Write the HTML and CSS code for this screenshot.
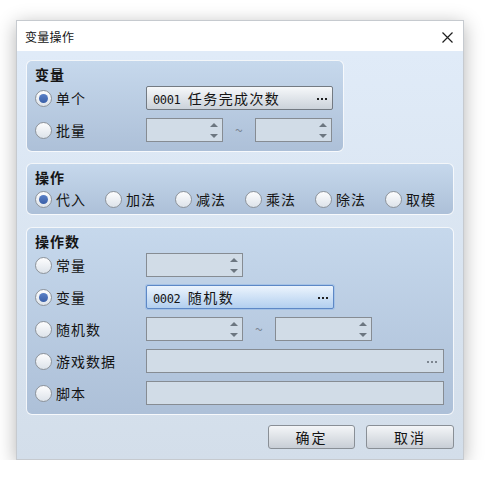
FILE: index.html
```html
<!DOCTYPE html>
<html lang="zh-CN">
<head>
    <meta charset="UTF-8">
    <title>变量操作</title>
    <link rel="stylesheet" href="styles.css">
</head>
<body>
    <div class="page">
        <div class="dialog">
            <div class="titlebar">
                <span class="title">变量操作</span>
                <svg class="close" width="11" height="11" viewBox="0 0 11 11">
                    <path d="M0.5 0.5 L10.5 10.5 M10.5 0.5 L0.5 10.5" stroke="#1e1e1e" stroke-width="1.2" fill="none"/>
                </svg>
            </div>
            <div class="content">
                <!-- target variable -->
                <div class="group group-var">
                    <div class="group-title">变量</div>
                    <div class="row">
                        <label class="opt"><span class="radio checked"></span>单个</label>
                        <div class="picker w187"><span class="ptext"><span class="num">0001</span> 任务完成次数</span><span class="dots"><i></i><i></i><i></i></span></div>
                    </div>
                    <div class="row">
                        <label class="opt"><span class="radio"></span>批量</label>
                        <div class="spin w77"><span class="arrows"><b class="up"></b><b class="down"></b></span></div>
                        <span class="tilde">~</span>
                        <div class="spin w77"><span class="arrows"><b class="up"></b><b class="down"></b></span></div>
                    </div>
                </div>

                <!-- operation -->
                <div class="group group-op">
                    <div class="group-title">操作</div>
                    <div class="op-row">
                        <label class="opt op"><span class="radio checked"></span>代入</label>
                        <label class="opt op"><span class="radio"></span>加法</label>
                        <label class="opt op"><span class="radio"></span>减法</label>
                        <label class="opt op"><span class="radio"></span>乘法</label>
                        <label class="opt op"><span class="radio"></span>除法</label>
                        <label class="opt op"><span class="radio"></span>取模</label>
                    </div>
                </div>

                <!-- operand -->
                <div class="group group-operand">
                    <div class="group-title">操作数</div>
                    <div class="row">
                        <label class="opt"><span class="radio"></span>常量</label>
                        <div class="spin w97"><span class="arrows"><b class="up"></b><b class="down"></b></span></div>
                    </div>
                    <div class="row">
                        <label class="opt"><span class="radio checked"></span>变量</label>
                        <div class="picker focused w188"><span class="ptext"><span class="num">0002</span> 随机数</span><span class="dots"><i></i><i></i><i></i></span></div>
                    </div>
                    <div class="row">
                        <label class="opt"><span class="radio"></span>随机数</label>
                        <div class="spin w97"><span class="arrows"><b class="up"></b><b class="down"></b></span></div>
                        <span class="tilde">~</span>
                        <div class="spin w97"><span class="arrows"><b class="up"></b><b class="down"></b></span></div>
                    </div>
                    <div class="row">
                        <label class="opt"><span class="radio"></span>游戏数据</label>
                        <div class="field w298"><span class="dots grey"><i></i><i></i><i></i></span></div>
                    </div>
                    <div class="row">
                        <label class="opt"><span class="radio"></span>脚本</label>
                        <div class="field w298"></div>
                    </div>
                </div>

                <div class="buttons">
                    <button class="btn ok">确定</button>
                    <button class="btn cancel">取消</button>
                </div>
            </div>
        </div>
    </div>
</body>
</html>
```

FILE: styles.css
```css
body {
    margin: 0;
    background-color: #fff;
    font-family: "Noto Sans CJK SC", "Noto Sans", sans-serif;
    color: #141414;
}
.page {
    padding: 20px 0 0 16px;
}
.dialog {
    width: 448px;
    height: 440px;
    box-sizing: border-box;
    border: 1px solid #c6cacf;
    box-shadow: 0 4px 18px rgba(0, 0, 0, 0.3);
    background: linear-gradient(#e1ecf9, #d3deea);
    display: flex;
    flex-direction: column;
}
.titlebar {
    height: 30px;
    background-color: #fff;
    display: flex;
    align-items: center;
    justify-content: space-between;
    padding: 0 10px 0 8px;
}
.title {
    font-size: 12px;
    letter-spacing: 0.3px;
}
.close {
    margin-top: 2px;
}
.content {
    flex: 1;
    padding: 9px 9px 0 9px;
    display: flex;
    flex-direction: column;
}
.group {
    border: 1px solid rgba(255, 255, 255, 0.85);
    border-radius: 6px;
    background: linear-gradient(#c6d8ec, #adc0d8);
    padding: 4px 8px 9px;
}
.group-var {
    width: 318px;
    box-sizing: border-box;
}
.group-op {
    margin-top: 11px;
    padding-bottom: 5px;
}
.group-operand {
    margin-top: 12px;
}
.group-title {
    font-size: 14px;
    font-weight: bold;
    letter-spacing: 1px;
    line-height: 18px;
    height: 18px;
    margin-bottom: 3px;
}
.row {
    display: flex;
    align-items: center;
    height: 24px;
}
.row + .row {
    margin-top: 8px;
}
.opt {
    display: flex;
    align-items: center;
    gap: 4px;
    font-size: 14px;
    letter-spacing: 1px;
    width: 111px;
    flex: none;
}
.op-row {
    display: flex;
    height: 20px;
    align-items: center;
}
.opt.op {
    width: 70px;
}
.radio {
    width: 15px;
    height: 15px;
    border: 1px solid #8d939a;
    border-radius: 50%;
    background: linear-gradient(#fdfdfe, #dde3ea);
    display: flex;
    align-items: center;
    justify-content: center;
    flex: none;
}
.radio.checked::after {
    content: "";
    width: 9px;
    height: 9px;
    border-radius: 50%;
    background: linear-gradient(#5a80c6, #3a5fa8);
}
.picker,
.spin,
.field {
    height: 24px;
    box-sizing: border-box;
    display: flex;
    align-items: center;
    justify-content: space-between;
    flex: none;
}
.picker {
    border: 1px solid #737a82;
    border-radius: 2px;
    background: linear-gradient(#f6f8fa, #cbd2da);
    padding: 0 5px 0 6px;
}
.picker.focused {
    border-color: #5d88c6;
    background: linear-gradient(#ecf4fd, #b2cfef);
    box-shadow: 0 0 0 1px rgba(140, 180, 230, 0.5);
}
.ptext {
    font-size: 14px;
    letter-spacing: 1.4px;
    white-space: nowrap;
}
.num {
    font-family: "DejaVu Sans Mono", monospace;
    font-size: 12px;
    letter-spacing: -0.4px;
    margin-right: 3px;
}
.dots {
    display: flex;
    gap: 2px;
    margin-top: 2px;
}
.dots i {
    width: 2px;
    height: 2px;
    background-color: #202020;
}
.dots.grey i {
    background-color: #7d8690;
}
.spin,
.field {
    border: 1px solid #868c93;
    background-color: #d1dce7;
}
.field {
    justify-content: flex-end;
    padding-right: 6px;
}
.spin {
    justify-content: flex-end;
    padding-right: 4px;
}
.arrows {
    display: flex;
    flex-direction: column;
    justify-content: space-between;
    height: 15px;
}
.arrows b {
    width: 0;
    height: 0;
    border-left: 4px solid transparent;
    border-right: 4px solid transparent;
}
.arrows .up {
    border-bottom: 4px solid #6c7680;
}
.arrows .down {
    border-top: 4px solid #6c7680;
}
.tilde {
    width: 32px;
    text-align: center;
    color: #7b8794;
    font-size: 14px;
}
.w77 { width: 77px; }
.w97 { width: 97px; }
.w187 { width: 187px; }
.w188 { width: 188px; }
.w298 { width: 298px; }
.buttons {
    display: flex;
    justify-content: flex-end;
    gap: 11px;
    margin-top: 10px;
}
.btn {
    height: 24px;
    border: 1px solid #898f96;
    border-radius: 3px;
    background: linear-gradient(#f4f6f8, #c8ced6);
    font-family: inherit;
    font-size: 14px;
    letter-spacing: 2px;
    color: #141414;
    padding: 0;
}
.btn.ok { width: 87px; }
.btn.cancel { width: 88px; }
```
